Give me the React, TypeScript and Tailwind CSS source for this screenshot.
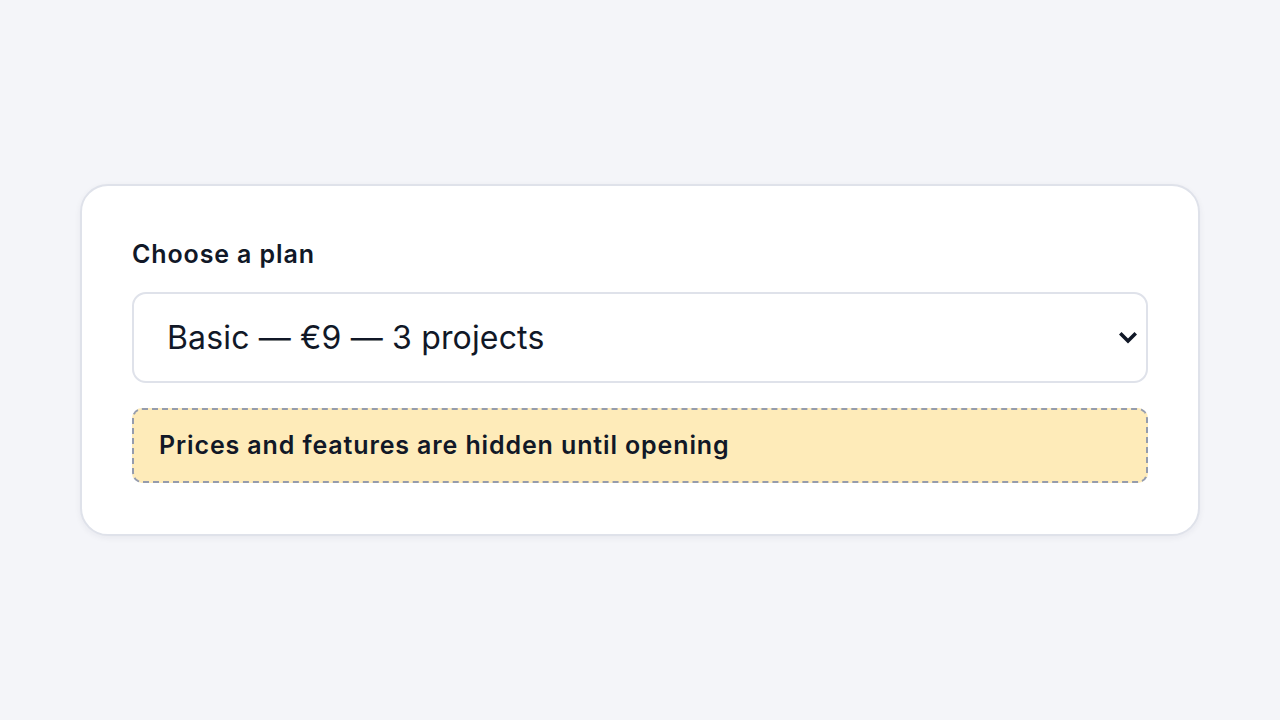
import React from "react";

export default function App() {
  return (
    <div
      className="min-h-screen w-full bg-[#f4f5f9] flex items-center justify-center"
      style={{ fontFamily: "Inter, 'Noto Sans', sans-serif" }}
    >
      <div className="w-[1120px] rounded-[28px] border-2 border-[#dfe2ea] bg-white px-[50px] pt-[50px] pb-[51px] shadow-[0_2px_6px_rgba(30,40,70,0.06)]">
        <div className="pt-[2px] text-[25px] leading-[32px] font-semibold text-[#111827] tracking-[0.035em]">
          Choose a plan
        </div>
        <div className="mt-[22px] relative h-[91px] rounded-[14px] border-2 border-[#dfe2ea] bg-white flex items-center pl-[33px] pr-[20px]">
          <span className="text-[32px] text-[#111827] font-normal tracking-[0.005em]">
            Basic — €9 — 3 projects
          </span>
          <svg
            className="absolute right-[9px] top-1/2 -translate-y-1/2"
            width="18"
            height="14"
            viewBox="0 0 18 14"
          >
            <path
              d="M2.5 3.5 L9 10 L15.5 3.5"
              fill="none"
              stroke="#111827"
              strokeWidth="3.6"
              strokeLinecap="square"
            />
          </svg>
        </div>
        <div className="mt-[25px] h-[75px] rounded-[10px] border-2 border-dashed border-[#959cad] bg-[#feebb9] flex items-center px-[25px]">
          <span className="text-[25px] font-semibold text-[#111827] tracking-[0.035em]">
            Prices and features are hidden until opening
          </span>
        </div>
      </div>
    </div>
  );
}
